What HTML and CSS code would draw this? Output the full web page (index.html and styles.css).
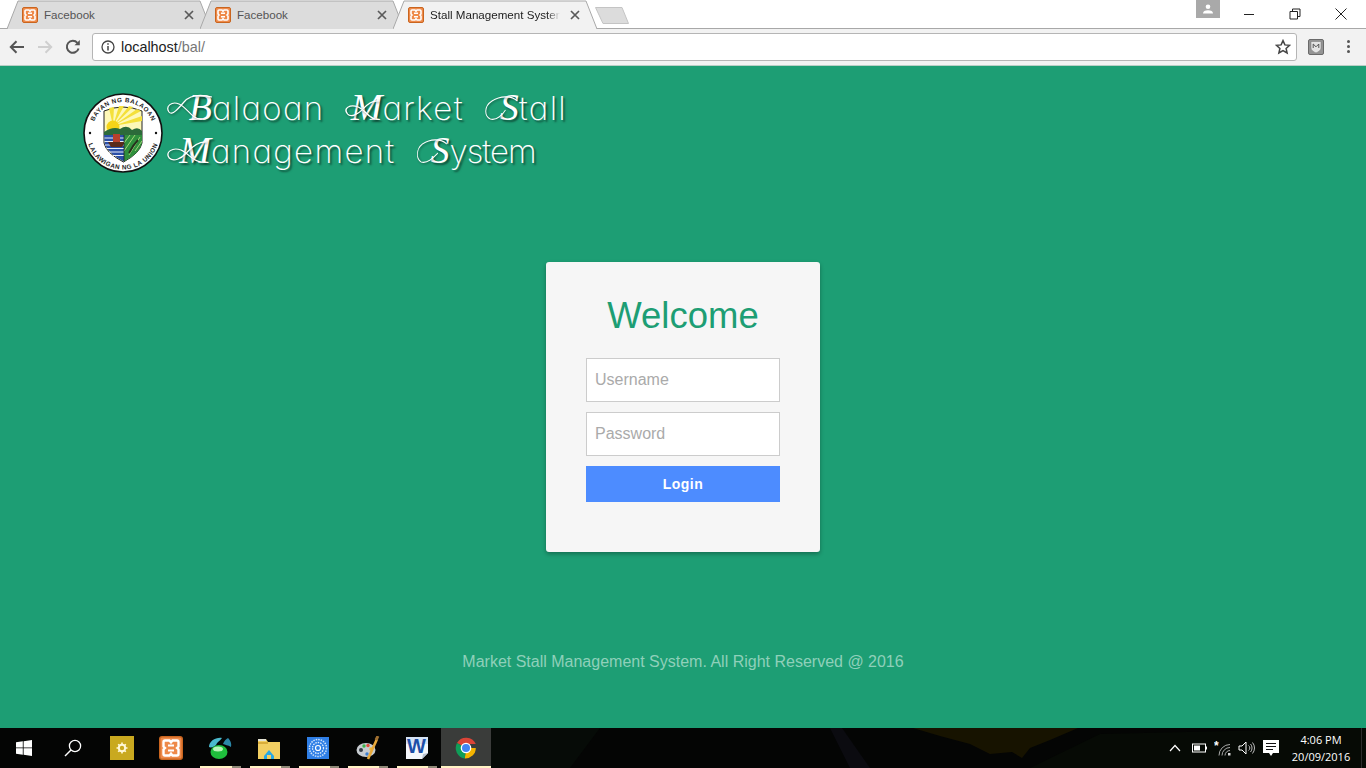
FILE: index.html
```html
<!DOCTYPE html>
<html lang="en">
<head>
<meta charset="utf-8">
<title>Stall Management System</title>
<link rel="stylesheet" href="styles.css">
</head>
<body>
<svg class="defs" width="0" height="0" aria-hidden="true">
  <defs>
    <symbol id="xampp" viewBox="0 0 16 16">
      <rect x="0.5" y="0.5" width="15" height="15" rx="1.500" fill="#ee8a4a" stroke="#c9651f"/>
      <path d="M4 3h3l1 1.200L9 3h3a1 1 0 0 1 1 1v3l-1 1 1 1v3a1 1 0 0 1-1 1H9l-1-1.200L7 13H4a1 1 0 0 1-1-1V9l1-1-1-1V4a1 1 0 0 1 1-1z" fill="none" stroke="#fff" stroke-width="1.600"/>
      <path d="M6 6.300h4M6 9.700h4" stroke="#fff" stroke-width="1.400"/>
    </symbol>
    <symbol id="tabclose" viewBox="0 0 10 10">
      <path d="M1 1l8 8M9 1l-8 8" stroke="#5a5a5a" stroke-width="1.700" fill="none"/>
    </symbol>
  </defs>
</svg>

<header class="browser">
  <div class="tabstrip">
    <div class="tab">
      <svg class="tab-bg" viewBox="0 0 204 29"><path d="M0 29 L11 1 H193 L204 29" fill="#dcdcdc" stroke="#a8a8a8"/></svg>
      <svg class="tab-icon"><use href="#xampp"/></svg>
      <span class="tab-title">Facebook</span>
      <svg class="tab-close"><use href="#tabclose"/></svg>
    </div>
    <div class="tab">
      <svg class="tab-bg" viewBox="0 0 204 29"><path d="M0 29 L11 1 H193 L204 29" fill="#dcdcdc" stroke="#a8a8a8"/></svg>
      <svg class="tab-icon"><use href="#xampp"/></svg>
      <span class="tab-title">Facebook</span>
      <svg class="tab-close"><use href="#tabclose"/></svg>
    </div>
    <div class="tab tab-active">
      <svg class="tab-bg" viewBox="0 0 204 29"><path d="M0 29 L11 1 H193 L204 29" fill="#f2f2f2" stroke="#a8a8a8"/></svg>
      <svg class="tab-icon"><use href="#xampp"/></svg>
      <span class="tab-title tab-title-dark">Stall Management System</span>
      <svg class="tab-close"><use href="#tabclose"/></svg>
    </div>
    <svg class="newtab" viewBox="0 0 34 17"><path d="M0.500 0.500H27L33.500 16.500H8z" fill="#dcdcdc" stroke="#c4c4c4"/></svg>
    <div class="profile">
      <svg width="12" height="10" viewBox="0 0 12 10"><circle cx="6" cy="2.800" r="2.300" fill="#fff"/><path d="M1 9.500c0-2.500 2-3.200 5-3.200s5 .7 5 3.200z" fill="#fff"/></svg>
    </div>
    <div class="winbtn"><svg width="12" height="12" viewBox="0 0 12 12"><path d="M1 6.500h10" stroke="#222" stroke-width="1"/></svg></div>
    <div class="winbtn"><svg width="12" height="12" viewBox="0 0 12 12"><path d="M1 3.500h7.500V11H1zM3.500 3.500V1H11v7.500H8.500" fill="none" stroke="#222"/></svg></div>
    <div class="winbtn"><svg width="12" height="12" viewBox="0 0 12 12"><path d="M.5.500l11 11M11.500.500l-11 11" stroke="#222"/></svg></div>
  </div>
  <div class="toolbar">
    <div class="navbtn"><svg width="16" height="14" viewBox="0 0 16 14"><path d="M15 7H2M7.500 1.200L1.800 7l5.700 5.800" fill="none" stroke="#555" stroke-width="2"/></svg></div>
    <div class="navbtn"><svg width="16" height="14" viewBox="0 0 16 14"><path d="M1 7h13M8.500 1.200L14.200 7l-5.700 5.800" fill="none" stroke="#cfcfcf" stroke-width="2"/></svg></div>
    <div class="navbtn"><svg width="16" height="16" viewBox="0 0 16 16"><path d="M13.600 9.500A6 6 0 1 1 12.400 3.800" fill="none" stroke="#555" stroke-width="2"/><path d="M9.500 6.200h5.300V.9z" fill="#555"/></svg></div>
    <div class="omnibox">
      <svg class="info" width="14" height="14" viewBox="0 0 14 14"><circle cx="7" cy="7" r="6" fill="none" stroke="#444" stroke-width="1.300"/><path d="M7 6v4.500M7 3.300v1.500" stroke="#444" stroke-width="1.500"/></svg>
      <span class="url">localhost<span class="url-path">/bal/</span></span>
      <svg class="star" width="16" height="16" viewBox="0 0 16 16"><path d="M8 1.600l1.900 4.300 4.700.4-3.500 3.100 1 4.600L8 11.600 3.900 14l1-4.600L1.400 6.300l4.700-.4z" fill="none" stroke="#444" stroke-width="1.500"/></svg>
    </div>
    <div class="ext">
      <svg width="16" height="16" viewBox="0 0 16 16"><rect x=".5" y=".5" width="15" height="15" rx="1.500" fill="#949494" stroke="#6a6a6a"/><path d="M3 2.500h10v6.500c0 2.500-3 4-5 5-2-1-5-2.500-5-5z" fill="#e4e4e4" stroke="#777" stroke-width=".5"/><path d="M5.200 9V5l2.800 2.800L10.800 5v4" fill="none" stroke="#555" stroke-width="1"/></svg>
    </div>
    <div class="menu"><span class="menu-dot"></span><span class="menu-dot"></span><span class="menu-dot"></span></div>
  </div>
</header>

<main class="page">
  <div class="brand">
    <svg class="seal" viewBox="0 0 80 80" role="img" aria-label="Seal of Balaoan">
      <defs>
        <path id="sealtop" d="M9 40A31 31 0 0 1 71 40"/>
        <path id="sealbot" d="M3.500 40A36.500 36.500 0 0 0 76.500 40"/>
      </defs>
      <circle cx="40" cy="40" r="39" fill="#fff" stroke="#111" stroke-width="1.600"/>
      <text class="seal-text"><textPath href="#sealtop" startOffset="50%" text-anchor="middle">BAYAN NG BALAOAN</textPath></text>
      <text class="seal-text"><textPath href="#sealbot" startOffset="50%" text-anchor="middle">LALAWIGAN NG LA UNION</textPath></text>
      <circle cx="7" cy="40" r="1.200" fill="#111"/>
      <circle cx="73" cy="40" r="1.200" fill="#111"/>
      <path d="M21 18 Q40 10 59 18 V50 Q57 60 40.500 69 Q23 60 21 50z" fill="#fdf8b8" stroke="#222" stroke-width="1"/>
      <path d="M30 33 L26 15 L31 14zM30 33 L36 13 L41 13zM30 33 L46 13 L50 14zM30 33 L54 16 L58 18zM30 33 L59 23 V28z" fill="#f4e03a"/>
      <circle cx="30" cy="34" r="6.500" fill="#f6d418"/>
      <path d="M21 42 L21 39 Q30 33 37 36 Q44 31 49 37 Q55 33 59 38 V42z" fill="#2c6a3a"/>
      <path d="M21 42 H41 V68.500 Q26 61 22 52z" fill="#2a4fa8"/>
      <path d="M21.500 45h19.500M21.500 48.500h19.500M22 52h19M23.500 55.500h17.500M26 59h15M30 62.500h11" stroke="#e9eef8" stroke-width="1.100"/>
      <path d="M30 41h7v8h-7z" fill="#b7402c"/>
      <path d="M25 49h17l-3 5H28z" fill="#5a2a1a"/>
      <path d="M41 42 H59 V50 Q57 60 41 68.500z" fill="#2f8f3c"/>
      <path d="M41 58L52 42M41 50L47 42M46 62L57 44M52 58L59 48" stroke="#bfe58a" stroke-width=".8"/>
      <path d="M46 60 Q50 52 55 47" stroke="#26301c" stroke-width="1.800" fill="none"/>
      <path d="M41 42V68.500" stroke="#222" stroke-width=".8"/>
    </svg>
    <div class="brand-title">
      <div class="brand-line">
        <span class="word"><span class="swash swash-b"><svg class="flourish" viewBox="0 0 46 34" preserveAspectRatio="none"><path d="M46 5C34 2 24 3 18 10C12 17 6 24 3 20C-1 14 6 9 13 12C22 16 26 28 36 27" fill="none" stroke="#fff" stroke-width="1.200"/></svg>B</span>alaoan</span>
        <span class="word"><span class="swash swash-m"><svg class="flourish" viewBox="0 0 32 34" preserveAspectRatio="none"><path d="M30 9C24 8 20 12 16 17C12 22 6 26 3 22C-1 16 5 12 12 15C18 18 20 25 26 27" fill="none" stroke="#fff" stroke-width="1.200"/></svg>M</span>arket</span>
        <span class="word"><span class="swash swash-s"><svg class="flourish" viewBox="0 0 44 34" preserveAspectRatio="none"><path d="M42 9C34 3 20 4 10 9C0 14 0 24 8 27C16 29 24 22 27 18" fill="none" stroke="#fff" stroke-width="1.200"/></svg>S</span>tall</span>
      </div>
      <div class="brand-line">
        <span class="word"><span class="swash swash-m2"><svg class="flourish" viewBox="0 0 42 34" preserveAspectRatio="none"><path d="M38 7C30 6 24 12 19 18C14 24 7 27 3 23C-1 17 6 12 14 15C21 18 24 26 33 27" fill="none" stroke="#fff" stroke-width="1.200"/></svg>M</span>anagement</span>
        <span class="word word-tight"><span class="swash swash-s2"><svg class="flourish" viewBox="0 0 53 34" preserveAspectRatio="none"><path d="M48 9C38 3 22 4 10 9C0 14 0 24 8 27C18 29 28 22 34 18" fill="none" stroke="#fff" stroke-width="1.200"/></svg>S</span>ystem</span>
      </div>
    </div>
  </div>

  <form class="card">
    <h1 class="card-title">Welcome</h1>
    <input class="field" type="text" placeholder="Username">
    <input class="field" type="password" placeholder="Password">
    <button class="login" type="button">Login</button>
  </form>

  <p class="copyright">Market Stall Management System. All Right Reserved @ 2016</p>
</main>

<footer class="taskbar">
  <svg class="wallpaper" viewBox="0 0 1366 40" preserveAspectRatio="none" aria-hidden="true">
    <path d="M913 0H1078L1050 12 1030 20 1022 30 1012 24 990 26 970 16 940 8z" fill="#171300"/>
    <path d="M830 0L850 40H870L842 0z" fill="#0b0b10"/>
    <path d="M1030 40L1100 6 1366 0V40z" fill="#060a05"/>
    <path d="M490 0H600L570 40H490z" fill="#060b07"/>
  </svg>
  <div class="tb-start">
    <svg width="16" height="16" viewBox="0 0 16 16"><path d="M0 2.300L6.800 1.300V7.500H0zM7.600 1.200L16 0V7.500H7.600zM0 8.300H6.800V14.700L0 13.700zM7.600 8.300H16V16L7.600 14.800z" fill="#fff"/></svg>
  </div>
  <div class="tb-start tb-search">
    <svg width="18" height="18" viewBox="0 0 18 18"><circle cx="11" cy="7" r="5.600" fill="none" stroke="#fff" stroke-width="1.300"/><path d="M7 11l-6 6" stroke="#fff" stroke-width="1.500"/></svg>
  </div>
  <div class="app">
    <svg class="app-icon" viewBox="0 0 24 24"><rect width="24" height="24" fill="#c9a91f"/><circle cx="12" cy="12" r="3.200" fill="none" stroke="#fff8d8" stroke-width="2"/><path d="M12 6.500v2.500M12 15v2.500M6.500 12H9M15 12h2.500M8.200 8.200l1.700 1.700M14.100 14.100l1.700 1.700M15.800 8.200l-1.700 1.700M9.900 14.100l-1.700 1.700" stroke="#fff8d8" stroke-width="1.600"/></svg>
  </div>
  <div class="app">
    <svg class="app-icon"><use href="#xampp"/></svg>
  </div>
  <div class="app app-open">
    <svg class="app-icon" viewBox="0 0 24 24"><path d="M1 11C1 5 8 1 14 2 12 5 9 6 8 9 6 11 3 12 1 11z" fill="#4ab9cc"/><path d="M15 8C16 5 18 3 20 2 22 4 24 7 23 11 20 9 17 9 15 8z" fill="#2b87a8"/><ellipse cx="11" cy="16" rx="8.500" ry="7" fill="#1fbf3c"/><ellipse cx="10" cy="13" rx="5" ry="2.500" fill="#b9f5b8"/></svg>
  </div>
  <div class="app app-open">
    <svg class="app-icon" viewBox="0 0 24 24"><path d="M1 3h8l2 3h12v17H1z" fill="#f2cf62"/><path d="M1 6h10v2H1z" fill="#d9ad3a"/><path d="M1 3h8v2H1z" fill="#e3e3d5"/><path d="M7 20l5-6 5 6v3H7z" fill="#27a8e6"/><rect x="10" y="19" width="4" height="4" fill="#f2cf62"/></svg>
  </div>
  <div class="app app-open">
    <svg class="app-icon" viewBox="0 0 24 24"><rect x="1" y="1" width="22" height="22" fill="#2f7fe6"/><circle cx="12" cy="12" r="8.500" fill="none" stroke="#cfe3fb" stroke-width="1.500" stroke-dasharray="1.500 1"/><circle cx="12" cy="12" r="5.500" fill="none" stroke="#e5f0fd" stroke-width="1.300" stroke-dasharray="1.500 1"/><circle cx="12" cy="12" r="2.500" fill="none" stroke="#fff" stroke-width="1.200"/></svg>
  </div>
  <div class="app app-open">
    <svg class="app-icon" viewBox="0 0 24 24"><ellipse cx="10" cy="14" rx="9.500" ry="7" fill="#c7ccd0"/><circle cx="5" cy="14" r="2" fill="#333b44"/><circle cx="8" cy="10" r="1.700" fill="#3cb44b"/><circle cx="12" cy="9.500" r="1.700" fill="#e04b3c"/><circle cx="15" cy="13" r="1.700" fill="#f0b82e"/><circle cx="11" cy="18" r="1.700" fill="#3c7fd0"/><path d="M12 23L21 3" stroke="#e8a93a" stroke-width="2.600"/><path d="M20 4L22 0" stroke="#a07030" stroke-width="3"/></svg>
  </div>
  <div class="app app-open">
    <svg class="app-icon" viewBox="0 0 24 24"><path d="M1 1H23V17L17 23H1z" fill="#f4f7fb"/><path d="M1 1H23V8H1z" fill="#d5e3f5"/><text class="word-w" x="2" y="17">W</text><path d="M17 23l1-5 5-1z" fill="#b8c4d2"/></svg>
  </div>
  <div class="app app-open app-active">
    <svg class="app-icon" viewBox="0 0 24 24"><path d="M12 12L3 7A10.500 10.500 0 0 1 21.800 8H12z" fill="#db4437"/><path d="M12 12H21.800A10.500 10.500 0 0 1 10.800 22.500z" fill="#f4b400"/><path d="M12 12L10.800 22.500A10.500 10.500 0 0 1 3 7z" fill="#0f9d58"/><circle cx="12" cy="12" r="5.300" fill="#fff"/><circle cx="12" cy="12" r="4" fill="#4285f4"/></svg>
  </div>
  <div class="tray">
    <div class="tray-item tray-caret"><svg width="12" height="8" viewBox="0 0 12 8"><path d="M1 7l5-5.500L11 7" fill="none" stroke="#fff" stroke-width="1.200"/></svg></div>
    <div class="tray-item tray-caret"><svg width="15" height="10" viewBox="0 0 15 10"><rect x=".5" y="1" width="13" height="8" fill="none" stroke="#fff"/><rect x="2" y="2.500" width="6" height="5" fill="#fff"/><rect x="14" y="3.500" width="1" height="3" fill="#fff"/></svg></div>
    <div class="tray-item tray-caret"><svg width="18" height="18" viewBox="0 0 18 18"><path d="M5 16.500a11 11 0 0 1 11-11M8 16.500a8 8 0 0 1 8-8M11 16.500a5 5 0 0 1 5-5" fill="none" stroke="#aaa" stroke-width="1"/><path d="M14 14h2.500v2.500H14z" fill="#ddd"/><text class="tray-star" x="0" y="11">*</text></svg></div>
    <div class="tray-item tray-spk"><svg width="17" height="14" viewBox="0 0 17 14"><path d="M1 5h3l4-4v12l-4-4H1z" fill="none" stroke="#fff"/><path d="M10.500 4.500a3 3 0 0 1 0 5M12.500 3a6 6 0 0 1 0 8M14.500 1.500a8.500 8.500 0 0 1 0 11" fill="none" stroke="#bbb"/></svg></div>
    <div class="tray-item tray-note"><svg width="16" height="17" viewBox="0 0 16 17"><path d="M0 0H16V13H10L8 16 6 13H0z" fill="#fff"/><path d="M3 3.500h10M3 6.500h10M3 9.500h7" stroke="#111" stroke-width="1.100"/></svg></div>
    <div class="clock"><span>4:06 PM</span><span>20/09/2016</span></div>
    <div class="show-desktop"></div>
  </div>
</footer>
</body>
</html>
```
FILE: styles.css
```css
* { box-sizing: border-box; }
html, body { margin: 0; height: 100%; }
body {
  width: 1366px;
  height: 768px;
  overflow: hidden;
  display: flex;
  flex-direction: column;
  background: #1d9e74;
  font-family: "Liberation Sans", Arial, sans-serif;
}
.defs { position: absolute; }

/* Browser chrome */
.browser { flex: none; background: #fff; }
.tabstrip {
  height: 29px;
  display: flex;
  padding: 0 3px 0 7px;
  border-bottom: 1px solid #a8a8a8;
}
.tab {
  position: relative;
  flex: none;
  width: 204px;
  height: 29px;
  margin-right: -11px;
  padding: 7px 10px 0 15px;
  display: flex;
  align-items: flex-start;
}
.tab-active { z-index: 2; }
.tab-bg { position: absolute; left: 0; top: 0; width: 204px; height: 29px; }
.tab-icon { position: relative; flex: none; width: 16px; height: 16px; }
.tab-title {
  position: relative;
  flex: 1;
  margin: 0 10px 0 6px;
  font-size: 11.600px;
  line-height: 16px;
  color: #555;
  white-space: nowrap;
  overflow: hidden;
}
.tab-title-dark {
  color: #222;
  -webkit-mask-image: linear-gradient(to right, #000 90%, transparent);
  mask-image: linear-gradient(to right, #000 90%, transparent);
}
.tab-close { position: relative; flex: none; width: 10px; height: 10px; margin: 3px 7px 0 0; }
.newtab { flex: none; width: 34px; height: 17px; margin: 7px 567px 0 9px; }
.profile {
  flex: none;
  width: 24px;
  height: 18px;
  background: #a9a9a9;
  display: flex;
  align-items: center;
  justify-content: center;
  margin-right: 6px;
}
.winbtn {
  flex: none;
  width: 46px;
  height: 28px;
  display: flex;
  align-items: center;
  justify-content: center;
}
.toolbar {
  height: 37px;
  display: flex;
  align-items: center;
  padding: 0 4px 1px 3px;
  background: #f2f2f2;
  border-bottom: 1px solid #b9cfc6;
}
.navbtn {
  flex: none;
  width: 28px;
  display: flex;
  justify-content: center;
}
.omnibox {
  flex: 1;
  height: 28px;
  margin-left: 5px;
  display: flex;
  align-items: center;
  padding: 0 5px 0 8px;
  background: #fff;
  border: 1px solid #b5b5b5;
  border-radius: 3px;
}
.info { flex: none; }
.url { flex: 1; margin-left: 6px; font-size: 14.400px; color: #222; }
.url-path { color: #777; }
.star { flex: none; }
.ext { flex: none; width: 38px; display: flex; justify-content: center; }
.menu {
  flex: none;
  width: 27px;
  display: flex;
  flex-direction: column;
  align-items: center;
  gap: 2px;
}
.menu-dot { width: 3px; height: 3px; border-radius: 50%; background: #555; }

/* Page */
.page { flex: 1; min-height: 0; display: flex; flex-direction: column; }
.brand { display: flex; padding: 27px 0 0 83px; height: 107px; }
.seal { flex: none; width: 80px; height: 80px; }
.seal-text { font-size: 6.300px; font-weight: 700; letter-spacing: .5px; fill: #222; }
.brand-title { margin: -7px 0 0 3px; }
.brand-line {
  display: flex;
  gap: 20px;
  height: 43px;
  align-items: baseline;
  color: #fff;
  font-family: Inter, "Liberation Sans", sans-serif;
  font-weight: 200;
  font-size: 33px;
  line-height: 43px;
  font-feature-settings: "cv11";
  letter-spacing: 1.300px;
  text-shadow: 2px 2px 2px rgba(0, 0, 0, .5);
}
.word { display: inline-flex; align-items: baseline; white-space: nowrap; }
.word-tight { letter-spacing: -1px; }
.swash {
  position: relative;
  display: inline-block;
  text-align: right;
  font-family: "Liberation Serif", serif;
  font-style: italic;
  font-size: 38px;
  letter-spacing: 0;
}
.swash-b { width: 46px; }
.swash-m { width: 38px; }
.swash-s { width: 35px; }
.swash-m2 { width: 45px; }
.swash-s2 { width: 34px; }
.flourish {
  position: absolute;
  left: 0;
  top: 6px;
  width: 100%;
  height: 34px;
  overflow: visible;
  filter: drop-shadow(1px 1px 1px rgba(0, 0, 0, .45));
}
.card {
  flex: none;
  align-self: center;
  width: 274px;
  height: 290px;
  margin-top: 89px;
  padding: 31px 40px 0;
  display: flex;
  flex-direction: column;
  background: #f6f6f6;
  border-radius: 3px;
  box-shadow: 0 2px 4px rgba(0, 0, 0, .3);
}
.card-title {
  margin: 0 0 19px;
  font-size: 36.500px;
  font-weight: 400;
  line-height: 46px;
  text-align: center;
  color: #1d9e74;
}
.field {
  height: 44px;
  margin-bottom: 10px;
  padding: 0 8px;
  background: #fff;
  border: 1px solid #ccc;
  border-radius: 0;
  outline: none;
  font-family: inherit;
  font-size: 16px;
}
.field::placeholder { color: #aaa; opacity: 1; }
.login {
  height: 36px;
  padding: 0;
  background: #4d8cff;
  border: 0;
  color: #fff;
  font-family: inherit;
  font-size: 14px;
  font-weight: 700;
  letter-spacing: .5px;
}
.copyright {
  margin: 101px 0 0;
  font-size: 16px;
  line-height: 18px;
  text-align: center;
  color: #8fd0ba;
}

/* Taskbar */
.taskbar {
  position: relative;
  flex: none;
  height: 40px;
  display: flex;
  background: #040504;
}
.wallpaper { position: absolute; inset: 0; width: 100%; height: 100%; }
.tb-start {
  position: relative;
  flex: none;
  width: 48px;
  display: flex;
  align-items: center;
  justify-content: center;
}
.tb-search { width: 49px; }
.app {
  position: relative;
  flex: none;
  width: 49.200px;
  display: flex;
  align-items: center;
  justify-content: center;
}
.app-icon { width: 24px; height: 24px; }
.app-open::after {
  content: "";
  position: absolute;
  left: 5px;
  right: 4px;
  bottom: 0;
  height: 2px;
  background: linear-gradient(to right, #fff3c4 77%, #8f8a78 77%);
}
.app-active { background: #3a3c3a; }
.app-active::after { left: 0; right: 0; background: #fff3c4; }
.word-w { font-family: "Liberation Sans", sans-serif; font-weight: 700; font-size: 20px; fill: #1d4fa8; }
.tray {
  position: relative;
  margin-left: auto;
  display: flex;
  align-items: stretch;
}
.tray-item { flex: none; display: flex; align-items: center; justify-content: center; }
.tray-caret { width: 24px; }
.tray-spk { width: 22px; }
.tray-note { width: 28px; }
.tray-star { font-family: "Liberation Sans", sans-serif; font-size: 12px; font-weight: 700; fill: #fff; }
.clock {
  flex: none;
  width: 72px;
  display: flex;
  flex-direction: column;
  justify-content: center;
  align-items: center;
  gap: 2px;
  font-family: "Open Sans", sans-serif;
  font-size: 11px;
  line-height: 15px;
  color: #fff;
}
.show-desktop {
  flex: none;
  width: 9px;
  border-right: 4px solid transparent;
  box-shadow: inset -1px 0 0 #2c2c2c;
}
```
